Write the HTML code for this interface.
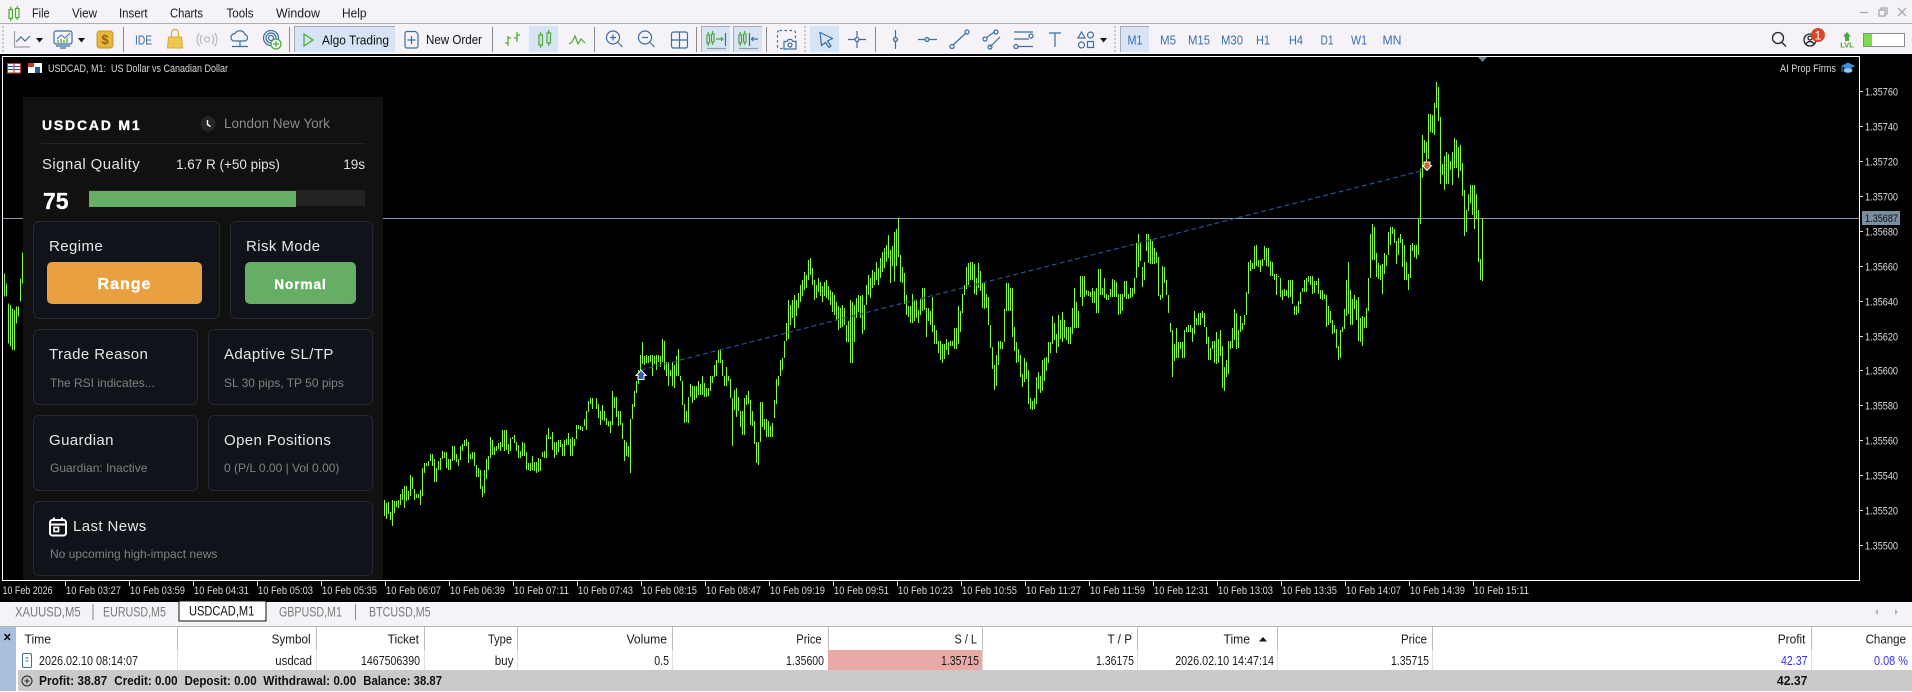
<!DOCTYPE html>
<html><head><meta charset="utf-8"><style>
html,body{margin:0;padding:0;background:#f5f3f7;width:1912px;height:692px;overflow:hidden;font-family:"Liberation Sans",sans-serif}
svg{position:absolute;left:0;top:0}
.p{position:absolute;left:23px;top:97px;width:360px;height:483px;background:#111}
.a{position:absolute;white-space:nowrap}
.c{position:absolute;box-sizing:border-box;background:#10141a;border:1px solid #25292e;border-radius:6px}
.l{font-size:15px;letter-spacing:.4px;color:#e6e6e6;line-height:18px}
.s{font-size:12px;color:#808080;line-height:14px}
.b{position:absolute;border-radius:5px;color:#fff;font-weight:bold;text-align:center;letter-spacing:1px;-webkit-text-stroke:.3px #fff}
</style></head><body>
<svg width="1912" height="692" viewBox="0 0 1912 692" font-family="Liberation Sans, sans-serif">
<!-- bars backgrounds -->
<rect x="0" y="24" width="1912" height="30" fill="#f5f3f7"/>
<rect x="0" y="23" width="1912" height="1" fill="#aeaeae"/>
<rect x="0" y="54" width="1912" height="548" fill="#000"/>
<!-- menu -->
<g fill="none" stroke="#4da832" stroke-width="1.2"><rect x="9" y="9.5" width="3.5" height="9"/><rect x="15.5" y="8.5" width="3.5" height="9"/><path d="M10.7 6.5V9.5M10.7 18.5V21M17.2 6V8.5M17.2 17.5V20"/></g>
<g font-size="12.5" fill="#1a1a1a">
<text x="32" y="17.5" textLength="17.6" lengthAdjust="spacingAndGlyphs">File</text>
<text x="72" y="17.5" textLength="25" lengthAdjust="spacingAndGlyphs">View</text>
<text x="119" y="17.5" textLength="28.6" lengthAdjust="spacingAndGlyphs">Insert</text>
<text x="170" y="17.5" textLength="33" lengthAdjust="spacingAndGlyphs">Charts</text>
<text x="226.5" y="17.5" textLength="27" lengthAdjust="spacingAndGlyphs">Tools</text>
<text x="276" y="17.5" textLength="44" lengthAdjust="spacingAndGlyphs">Window</text>
<text x="342" y="17.5" textLength="24.5" lengthAdjust="spacingAndGlyphs">Help</text>
</g>
<!-- window controls -->
<g stroke="#a8a8a8" fill="none" stroke-width="1.3"><path d="M1860 12.5H1868"/><rect x="1879" y="10" width="6" height="6"/><path d="M1881 10V8H1887V14H1885"/><path d="M1898 8L1906 16M1906 8L1898 16"/></g>
<!-- toolbar pressed -->
<g fill="#d6e4f5"><rect x="294" y="26" width="101" height="26"/><rect x="529" y="26" width="29" height="26"/><rect x="701" y="26" width="29" height="26"/><rect x="733" y="26" width="29" height="26"/><rect x="810" y="26" width="29" height="26"/><rect x="1120" y="26" width="29" height="26"/></g>
<g fill="none" stroke="#a9adb3"><path d="M294.5 52V26.5H395M701.5 52V26.5H730M733.5 52V26.5H762M1120.5 52V26.5H1149"/></g>
<g stroke="#8c8c8c" fill="none"><path d="M123.5 27V52M289.5 27V52M492.5 27V52M594.5 27V52M696.5 27V52M766.5 27V52M875.5 27V52"/></g>
<g stroke="#b5b5b5" stroke-dasharray="2 2" fill="none" stroke-width="1.5"><path d="M3 26V52M805 26V52M1115 26V52"/></g>
<!-- toolbar icons -->
<g fill="none" stroke="#3a6ea5" stroke-width="1.2">
<path d="M14.5 31V47H30" stroke="#a0a0a0"/><path d="M16 42L21 37L25 41L30 36"/>
<rect x="54" y="31" width="18" height="13" rx="2"/><path d="M56 46H70M60 48H66"/><path d="M57 39L61 35L65 38L70 33" stroke-width="1"/>
<path d="M58 43V40M61 43V39M64 43V40M67 43V38" stroke="#4da832"/>
<path d="M231 37a4 4 0 014-3.5a5.5 5.5 0 0110 1a3.3 3.3 0 01-.5 6.5H235a3.5 3.5 0 01-4-4zM240 41.5V46M232 46.5H248"/>
<circle cx="271" cy="38" r="7.5"/><circle cx="271" cy="38" r="5"/><circle cx="271" cy="38" r="2.5"/>
<path d="M408 31.5H415.5L418 34V46a2 2 0 01-2 2H407a2 2 0 01-2-2V33.5a2 2 0 012-2zM411.5 36V44M407.5 40H415.5"/>
<circle cx="613" cy="37.5" r="6.5"/><path d="M618 42.5L622.5 47M610 37.5H616M613 34.5V40.5"/>
<circle cx="645" cy="37.5" r="6.5"/><path d="M650 42.5L654.5 47M642 37.5H648"/>
<rect x="671.5" y="32" width="16" height="16" rx="2"/><path d="M679.5 32V48M671.5 40H687.5"/>
<path d="M725.5 33V46M749.5 33V46M758 39H751.5M753.5 37L751.5 39L753.5 41"/>
<path d="M707 48.5H726M739 48.5H758" stroke="#9a9a9a"/>
<rect x="777.5" y="30.5" width="18" height="18" rx="2" stroke-dasharray="2.5 2.5"/>
<path d="M784 41.5H787L788.5 39.5H791.5L793 41.5H796V49H784Z" fill="#f5f3f7"/><circle cx="790" cy="45" r="2"/>
<path d="M820 32.5L832.5 38.5L827.5 41L831 46L829 47.5L825.5 42.5L821.5 45.5Z"/>
<path d="M848 39.5H866M857 31V48"/><circle cx="857" cy="39.5" r="2" fill="#f5f3f7"/>
<path d="M895.5 30V49"/><circle cx="895.5" cy="39.5" r="2" fill="#cfdcee"/>
<path d="M918 39.5H937"/><circle cx="927" cy="39.5" r="2" fill="#cfdcee"/>
<path d="M953 45L966 33"/><circle cx="952" cy="46.5" r="2"/><circle cx="967" cy="32" r="2"/>
<path d="M986 38L995 31.5M990 47L1000 37"/><circle cx="985" cy="39" r="2"/><circle cx="996" cy="32" r="2"/><circle cx="990" cy="47" r="2"/>
<path d="M1014 32H1033M1014 39H1029M1018 46.5H1033"/><circle cx="1031" cy="36" r="2"/><circle cx="1016" cy="46.5" r="2"/>
<path d="M1049 33H1061M1055 33V47"/>
<path d="M1081.5 32L1085 38H1078Z"/><circle cx="1090.5" cy="35" r="3"/><circle cx="1081.5" cy="45" r="3"/><rect x="1087.5" y="41.5" width="6" height="6"/>
</g>
<g fill="none" stroke="#4da832" stroke-width="1.2">
<path d="M304 34V46L313 40Z"/>
<path d="M508 36V46M505 43H508M508 38H511M517 32V42M514 38H517M517 35H520"/>
<rect x="539" y="35" width="3.5" height="10"/><rect x="547" y="33" width="3.5" height="10"/><path d="M540.7 32V35M540.7 45V48M548.7 30V33M548.7 43V46"/>
<path d="M569 44L572 42L575 36L578 44L581 39L585 43"/>
<rect x="707" y="35" width="2.5" height="8"/><rect x="711.5" y="34" width="2.5" height="8"/><path d="M708.2 32V35M708.2 43V46M712.7 31V34M712.7 42V45M716 39H723M721 37L723 39L721 41"/>
<rect x="739" y="35" width="2.5" height="8"/><rect x="743.5" y="34" width="2.5" height="8"/><path d="M740.2 32V35M740.2 43V46M744.7 31V34M744.7 42V45"/>
</g>
<path d="M36 38H43L39.5 42.5Z M78 38H85L81.5 42.5Z M1100 38H1107L1103.5 42.5Z" fill="#111"/>
<rect x="97" y="31" width="16" height="17" rx="3" fill="#e8b63d" stroke="#c7962a"/>
<text x="105" y="44" font-size="13" font-weight="bold" fill="#8a6414" text-anchor="middle">$</text>
<text x="135" y="44.5" font-size="13" fill="#3a6ea5" textLength="17" lengthAdjust="spacingAndGlyphs">IDE</text>
<path d="M168.5 37H181.5L182.5 48H167.5Z" fill="#f0c84e" stroke="#d7a832"/>
<path d="M171.5 37V33a3.5 3.5 0 017 0V37" fill="none" stroke="#d7a832" stroke-width="1.2"/>
<g fill="none" stroke="#b9b9b9" stroke-width="1.2"><circle cx="207" cy="39.5" r="2.5"/><path d="M202 35a7 7 0 000 9M212 35a7 7 0 010 9M199.5 33a10 10 0 000 13M214.5 33a10 10 0 010 13"/></g>
<circle cx="276" cy="44" r="5" fill="#f5f3f7" stroke="#4da832" stroke-width="1.2"/><path d="M276 41V47M273 44H279" stroke="#4da832" stroke-width="1.2"/>
<text x="322" y="44.5" font-size="13" fill="#111" textLength="67" lengthAdjust="spacingAndGlyphs">Algo Trading</text>
<text x="426" y="44" font-size="13" fill="#111" textLength="56" lengthAdjust="spacingAndGlyphs">New Order</text>
<g font-size="13" fill="#3f6ea8" text-anchor="middle">
<text x="1135" y="44.5" textLength="15" lengthAdjust="spacingAndGlyphs">M1</text>
<text x="1168" y="44.5" textLength="16" lengthAdjust="spacingAndGlyphs">M5</text>
<text x="1199" y="44.5" textLength="22" lengthAdjust="spacingAndGlyphs">M15</text>
<text x="1232" y="44.5" textLength="22" lengthAdjust="spacingAndGlyphs">M30</text>
<text x="1263" y="44.5" textLength="14" lengthAdjust="spacingAndGlyphs">H1</text>
<text x="1296" y="44.5" textLength="14" lengthAdjust="spacingAndGlyphs">H4</text>
<text x="1327" y="44.5" textLength="13" lengthAdjust="spacingAndGlyphs">D1</text>
<text x="1359" y="44.5" textLength="16" lengthAdjust="spacingAndGlyphs">W1</text>
<text x="1392" y="44.5" textLength="19" lengthAdjust="spacingAndGlyphs">MN</text>
</g>
<!-- right side -->
<g fill="none" stroke="#222" stroke-width="1.3"><circle cx="1778" cy="38" r="5.5"/><path d="M1782 42.5L1786 46.5"/><circle cx="1810" cy="40" r="6"/><circle cx="1810" cy="38" r="2"/><path d="M1806 44a4.5 4.5 0 018 0"/></g>
<circle cx="1818" cy="35" r="7" fill="#d9472b"/><text x="1818" y="39.5" font-size="12" fill="#fff" text-anchor="middle">1</text>
<path d="M1847 32L1851 36.5H1849V41H1845V36.5H1843Z" fill="#4da832"/>
<text x="1847" y="47.5" font-size="7.5" font-weight="bold" fill="#4da832" text-anchor="middle">LVL</text>
<rect x="1863.5" y="33.5" width="41" height="13" fill="#fff" stroke="#8c8c8c"/><rect x="1864" y="34" width="8" height="12" fill="#7fdb4f"/>
<!-- chart frame -->
<path d="M2.5 56.5H1859.5V580.5H2.5Z" fill="none" stroke="#fff"/>
<path d="M1478 57H1487L1482.5 62Z" fill="#6f7f91"/>
<!-- price line -->
<rect x="3" y="218" width="1856" height="1" fill="#8a9bb0"/>
<!-- bars -->
<g fill="none" stroke="#88fa2e" shape-rendering="crispEdges">
<g transform="translate(0,90) scale(.33333)" stroke-width="3"><path d="M13 550V620M19 580V620M25 640V760M31 645V770M37 655V780M43 660V782M49 650V700M55 650V680M61 565V635M67 487V580"/></g>
<g transform="translate(384,400) scale(.33333)" stroke-width="3"><path d="M1 300V348M7 309V357M13 306V342M19 336V360M25 300V378M31 303V339M37 303V321M43 300V324M49 282V315M55 267V300M61 258V324M67 258V303M73 273V300M79 225V288M85 231V267M91 267V300M97 282V294M103 282V294M109 270V315M115 204V288M121 189V219M127 189V198M133 183V198M139 162V183M145 162V198M151 177V246M157 204V246M163 183V210M169 174V210M175 153V177M181 156V174M187 156V204M193 177V210M199 177V210M205 138V183M211 138V180M217 162V186M223 177V198M229 138V180M235 132V153M241 120V138M247 117V138M253 126V189M259 162V177M265 156V177M271 156V198M277 195V231M283 204V231M289 210V267M295 258V291M301 210V279M307 177V237M313 168V210M319 111V174M325 120V165M331 141V165M337 138V153M343 129V147M349 126V153M355 90V141M361 90V153M367 90V150M373 132V162M379 114V153M385 111V117M391 105V129M397 126V153M403 135V174M409 153V174M415 126V168M421 129V168M427 156V210M433 189V210M439 189V213M445 168V210M451 186V213M457 186V219M463 174V216M469 177V213M475 156V171M481 153V174M487 105V174M493 84V117M499 111V117M505 96V150M511 126V174M517 126V165M523 120V156M529 120V141M535 132V168M541 120V168M547 117V135M553 99V135M559 117V168M565 111V168M571 117V138M577 75V117M583 75V87M589 78V90M595 81V93M601 57V78M607 33V90M613 3V36M619 -6V12M625 -6V27M637 -6V27M643 12V54"/></g>
<g transform="translate(600,320) scale(.33333)" stroke-width="3"><path d="M1 273V315M7 255V300M13 273V303M19 294V315M25 303V320M31 303V339M37 213V315M43 231V264M49 231V291M55 273V318M61 273V315M67 309V357M73 360V423M79 366V408M85 378V411M91 297V459M97 252V297M103 213V261M109 183V219M115 150V192M121 105V150M127 66V132M133 108V135M139 105V129M145 108V129M151 105V126M157 105V168M163 108V132M169 105V150M175 105V126M181 108V141M187 57V126M193 63V150M199 126V168M205 126V198M211 150V168M217 126V198M223 135V204M229 108V168M235 87V168M241 168V183M247 183V255M253 252V309M259 273V306M265 231V309M271 192V231M277 198V249M283 198V240M289 198V234M295 183V225M301 192V225M307 168V225M313 189V231M319 204V231M325 204V228M331 168V213M337 168V189M343 135V171M349 120V168M355 90V129M361 87V129M367 120V168M373 168V198M379 141V198M385 168V183M391 177V234M397 234V378M403 210V270M409 204V291M415 231V273M421 273V321M427 273V345M433 234V345M439 225V255M445 213V252M451 240V315M457 273V318M463 303V372M469 366V429M475 366V435M481 246V366M487 246V321M493 297V330M499 297V351M505 303V351M511 318V351M517 309V351M523 240V294M529 177V252M535 168V198M541 120V168M547 114V150M553 63V114"/></g>
<g stroke-width="1"><path d="M786.5 323V341M788.5 300V339M790.5 305V325M792.5 300V318M794.5 295V328M796.5 300V316M798.5 293V308M800.5 285V302M802.5 280V296M804.5 272V290M806.5 275V288M808.5 260V280M810.5 258V275M812.5 268V285M814.5 280V300M816.5 285V298M818.5 278V292M820.5 282V296M822.5 286V302M824.5 282V296M826.5 280V298M828.5 286V300M830.5 290V305M832.5 292V312M834.5 295V315M836.5 302V320M838.5 306V330M840.5 308V328M842.5 305V327M844.5 308V325M846.5 325V342M848.5 321V342M850.5 300V363M852.5 302V363M854.5 305V342M856.5 298V318M858.5 295V312M860.5 296V318M862.5 295V334M864.5 305V330M866.5 285V305M868.5 275V295M870.5 278V298M872.5 270V288M874.5 272V285M876.5 262V280M878.5 268V285M880.5 258V278M882.5 252V272M884.5 248V268M886.5 245V262M888.5 235V258"/></g>
<g transform="translate(890,210) scale(.33333)" stroke-width="3"><path d="M1 120V219M7 108V168M13 66V215M19 57V168M25 24V141M31 135V216M37 171V219M43 189V282M49 255V315M55 288V321M61 288V339M67 252V339M73 273V333M79 270V324M85 300V339M91 267V315M97 234V303M103 234V300M109 294V381M115 294V333M121 303V345M127 261V366M133 345V402M139 360V402M145 393V429M151 393V450M157 402V459M163 402V447M169 387V420M175 396V435M181 393V408M187 393V408M193 354V417M199 354V417M205 288V402M211 303V366M217 252V309M223 225V255M229 171V237M235 159V225M241 156V210M247 156V210M253 162V252M259 204V255M265 159V234M271 183V243M277 219V294M283 216V297M289 252V294M295 261V345M301 345V414M307 411V477M313 465V540M319 435V528M325 393V465M331 393V417M337 396V417M343 297V396M349 219V303M355 219V303M361 234V303M367 234V381M373 351V423M379 396V459M385 417V456M391 435V501M397 492V531M403 444V516M409 456V507M415 480V582M421 564V597M427 573V600M433 564V597M439 501V582M445 486V537M451 498V549M457 450V543M463 444V513M469 441V483M475 396V459M481 396V429M487 318V402M493 339V390M499 372V429M505 315V411M511 330V387M517 306V396M523 330V384M529 351V390M535 351V402M541 351V402M547 294V372M553 234V354M559 276V354M565 303V354M571 198V261M577 198V288M583 198V261M589 240V255M595 243V258M601 246V261M607 234V279M613 243V279M619 234V309M625 177V309M631 177V255M637 234V255M643 204V264M649 252V270M655 255V270M661 237V261M667 207V261M673 210V261M679 216V261M685 252V315M691 252V312M697 252V303M703 213V261M709 213V267M715 252V267M721 234V264M727 234V261M733 204V252M739 99V204M745 72V171M751 96V153M757 171V231M763 156V210M769 72V123M775 72V159M781 87V162M787 93V162M793 114V162M799 126V159M805 141V258M811 255V270M817 168V264M823 171V219M829 210V255M835 255V309M841 339V366M847 360V501M853 402V453M859 354V444M865 396V444M871 396V417M877 396V444M883 360V444M889 351V366M895 345V366M901 345V366M907 354V396M913 303V372M919 324V345M925 309V345M931 309V345M937 303V324M943 309V351M949 351V402M955 381V450M961 414V450M967 393V417M973 393V459M979 366V462M985 387V459M991 360V438M997 408V534M1003 471V543M1009 450V501M1015 393V492M1021 393V417M1027 354V414M1033 297V390M1039 309V417M1045 360V414M1051 318V366M1057 339V360M1063 315V345M1069 246V315M1075 156V252M1081 150V183M1087 159V177M1093 108V177M1099 105V168M1105 150V171M1111 150V186M1117 147V168M1123 108V150M1129 114V168M1135 114V171M1141 153V198M1147 156V198M1153 192V210M1159 192V255M1165 198V201M1171 204V261M1177 240V270M1183 237V258M1189 240V258M1195 210V264M1201 210V261M1207 210V282M1213 288V315M1219 288V315M1225 273V309M1231 246V282M1237 234V246M1243 210V246M1249 204V246M1255 198V216M1261 198V225M1267 198V252M1273 213V249M1279 213V225M1285 204V252M1291 240V267M1297 240V270M1303 252V267M1309 255V351M1315 288V345M1321 303V339M1327 330V372M1333 345V369M1339 357V414M1345 408V450M1351 360V444M1357 351V366M1363 297V357M1369 210V318M1375 156V312M1381 240V345M1387 267V345M1393 255V297M1399 270V330M1405 261V393M1411 324V396M1417 318V408M1423 321V354M1429 294V354M1435 204V303M1441 72V204M1447 42V150M1453 51V150M1459 129V201M1465 159V207M1471 165V210M1477 162V252M1483 129V192M1489 135V168M1495 66V135"/></g>
<g transform="translate(1320,70) scale(.33333)" stroke-width="3"><path d="M211 471V525M217 471V492M223 477V519M229 513V582M235 504V555M241 492V519M247 507V591M253 525V630M259 576V630M265 612V660M271 525V624M277 519V543M283 525V561M289 525V567M295 445V555M301 295V462M307 195V323M313 210V249M319 216V279M325 132V267M331 132V186M337 135V189M343 99V195M349 36V114M355 51V153M361 141V342M367 282V315M373 258V360M379 246V342M385 252V342M391 273V300M397 246V345M403 204V294M409 210V294M415 231V324M421 225V303M427 279V378M433 360V498M439 420V486M445 372V423M451 345V400M457 345V435M463 345V477M469 372V445M475 420V576M481 567V630M487 445V633"/></g>
</g>
<!-- trade line + arrows -->
<path d="M641 370L1425 170" stroke="#2a4f8f" stroke-width="1.2" stroke-dasharray="5 3" fill="none"/>
<path d="M641 370L646 375.5H644V379.5H638V375.5H636Z" fill="#2f5fa8" stroke="#fff"/>
<path d="M1427 170.5L1431.5 165.5H1430V162H1424V165.5H1422.5Z" fill="#d2622a" stroke="#fff"/>
<!-- price scale -->
<g font-size="11" fill="#dcdcdc" stroke="none">
<text x="1865" y="95.5" textLength="33" lengthAdjust="spacingAndGlyphs">1.35760</text>
<text x="1865" y="130.5" textLength="33" lengthAdjust="spacingAndGlyphs">1.35740</text>
<text x="1865" y="165.5" textLength="33" lengthAdjust="spacingAndGlyphs">1.35720</text>
<text x="1865" y="200.5" textLength="33" lengthAdjust="spacingAndGlyphs">1.35700</text>
<text x="1865" y="235.5" textLength="33" lengthAdjust="spacingAndGlyphs">1.35680</text>
<text x="1865" y="270.5" textLength="33" lengthAdjust="spacingAndGlyphs">1.35660</text>
<text x="1865" y="305.5" textLength="33" lengthAdjust="spacingAndGlyphs">1.35640</text>
<text x="1865" y="340.5" textLength="33" lengthAdjust="spacingAndGlyphs">1.35620</text>
<text x="1865" y="374.5" textLength="33" lengthAdjust="spacingAndGlyphs">1.35600</text>
<text x="1865" y="409.5" textLength="33" lengthAdjust="spacingAndGlyphs">1.35580</text>
<text x="1865" y="444.5" textLength="33" lengthAdjust="spacingAndGlyphs">1.35560</text>
<text x="1865" y="479.5" textLength="33" lengthAdjust="spacingAndGlyphs">1.35540</text>
<text x="1865" y="514.5" textLength="33" lengthAdjust="spacingAndGlyphs">1.35520</text>
<text x="1865" y="549.5" textLength="33" lengthAdjust="spacingAndGlyphs">1.35500</text>
</g>
<path d="M1860 91.5H1863M1860 126.5H1863M1860 161.5H1863M1860 196.5H1863M1860 231.5H1863M1860 266.5H1863M1860 301.5H1863M1860 336.5H1863M1860 370.5H1863M1860 405.5H1863M1860 440.5H1863M1860 475.5H1863M1860 510.5H1863M1860 545.5H1863" stroke="#ddd"/>
<rect x="1862" y="211" width="38" height="14" fill="#7b8ea1"/>
<text x="1865" y="222" font-size="11" fill="#111" textLength="33" lengthAdjust="spacingAndGlyphs">1.35687</text>
<!-- time scale -->
<path d="M65.5 581V586M129.5 581V586M193.5 581V586M257.5 581V586M321.5 581V586M385.5 581V586M449.5 581V586M513.5 581V586M577.5 581V586M641.5 581V586M705.5 581V586M769.5 581V586M833.5 581V586M897.5 581V586M961.5 581V586M1025.5 581V586M1089.5 581V586M1153.5 581V586M1217.5 581V586M1281.5 581V586M1345.5 581V586M1409.5 581V586M1473.5 581V586" stroke="#ddd"/>
<g font-size="11" fill="#dcdcdc">
<text x="2.5" y="594" textLength="50" lengthAdjust="spacingAndGlyphs">10 Feb 2026</text>
<text x="66" y="594" textLength="55" lengthAdjust="spacingAndGlyphs">10 Feb 03:27</text>
<text x="130" y="594" textLength="55" lengthAdjust="spacingAndGlyphs">10 Feb 03:59</text>
<text x="194" y="594" textLength="55" lengthAdjust="spacingAndGlyphs">10 Feb 04:31</text>
<text x="258" y="594" textLength="55" lengthAdjust="spacingAndGlyphs">10 Feb 05:03</text>
<text x="322" y="594" textLength="55" lengthAdjust="spacingAndGlyphs">10 Feb 05:35</text>
<text x="386" y="594" textLength="55" lengthAdjust="spacingAndGlyphs">10 Feb 06:07</text>
<text x="450" y="594" textLength="55" lengthAdjust="spacingAndGlyphs">10 Feb 06:39</text>
<text x="514" y="594" textLength="55" lengthAdjust="spacingAndGlyphs">10 Feb 07:11</text>
<text x="578" y="594" textLength="55" lengthAdjust="spacingAndGlyphs">10 Feb 07:43</text>
<text x="642" y="594" textLength="55" lengthAdjust="spacingAndGlyphs">10 Feb 08:15</text>
<text x="706" y="594" textLength="55" lengthAdjust="spacingAndGlyphs">10 Feb 08:47</text>
<text x="770" y="594" textLength="55" lengthAdjust="spacingAndGlyphs">10 Feb 09:19</text>
<text x="834" y="594" textLength="55" lengthAdjust="spacingAndGlyphs">10 Feb 09:51</text>
<text x="898" y="594" textLength="55" lengthAdjust="spacingAndGlyphs">10 Feb 10:23</text>
<text x="962" y="594" textLength="55" lengthAdjust="spacingAndGlyphs">10 Feb 10:55</text>
<text x="1026" y="594" textLength="55" lengthAdjust="spacingAndGlyphs">10 Feb 11:27</text>
<text x="1090" y="594" textLength="55" lengthAdjust="spacingAndGlyphs">10 Feb 11:59</text>
<text x="1154" y="594" textLength="55" lengthAdjust="spacingAndGlyphs">10 Feb 12:31</text>
<text x="1218" y="594" textLength="55" lengthAdjust="spacingAndGlyphs">10 Feb 13:03</text>
<text x="1282" y="594" textLength="55" lengthAdjust="spacingAndGlyphs">10 Feb 13:35</text>
<text x="1346" y="594" textLength="55" lengthAdjust="spacingAndGlyphs">10 Feb 14:07</text>
<text x="1410" y="594" textLength="55" lengthAdjust="spacingAndGlyphs">10 Feb 14:39</text>
<text x="1474" y="594" textLength="55" lengthAdjust="spacingAndGlyphs">10 Feb 15:11</text>
</g>
<!-- chart title -->
<g><rect x="7.5" y="63.5" width="13" height="9.5" fill="#f4f4f4" stroke="#c23a2e"/><path d="M8 66.5H20M8 69.5H20" stroke="#2a55a5"/><path d="M14 64V73" stroke="#c23a2e"/></g>
<g><rect x="28" y="63" width="14" height="10" fill="#fff"/><rect x="28" y="63" width="6" height="4" fill="#c23a2e"/><rect x="35" y="67" width="5" height="6" fill="#2a55a5"/></g>
<text x="48" y="72" font-size="11" fill="#d8d8d8" textLength="180" lengthAdjust="spacingAndGlyphs">USDCAD, M1:&#160;&#160;US Dollar vs Canadian Dollar</text>
<text x="1780" y="72" font-size="11" fill="#d8d8d8" textLength="56" lengthAdjust="spacingAndGlyphs">AI Prop Firms</text>
<path d="M1841 66L1848 62.5L1855 66L1848 69.5Z" fill="#3f8fd8"/><path d="M1844 68.5V71.5Q1848 74 1852 71.5V68.5" fill="#9fc8ee" stroke="#3f8fd8" stroke-width=".7"/><path d="M1842 67V72" stroke="#3f8fd8"/>
<!-- tabs -->
<rect x="0" y="602" width="1912" height="24" fill="#f5f3f7"/>
<rect x="179" y="601" width="87" height="20" fill="#fff" stroke="#111"/>
<g font-size="13.5" fill="#7a7a7a">
<text x="15" y="616.5" textLength="65.7" lengthAdjust="spacingAndGlyphs">XAUUSD,M5</text>
<text x="103" y="616.5" textLength="62.9" lengthAdjust="spacingAndGlyphs">EURUSD,M5</text>
<text x="189" y="615.5" textLength="65.3" lengthAdjust="spacingAndGlyphs" fill="#111">USDCAD,M1</text>
<text x="279" y="616.5" textLength="62.9" lengthAdjust="spacingAndGlyphs">GBPUSD,M1</text>
<text x="369" y="616.5" textLength="61.6" lengthAdjust="spacingAndGlyphs">BTCUSD,M5</text>
</g>
<path d="M93 604V620M355.5 604V620" stroke="#8a8a8a"/>
<path d="M1895 609L1898 612 1895 615Z M1878 609L1875 612L1878 615Z" fill="#b5b5b5"/>
<!-- table -->
<rect x="0" y="626" width="1912" height="1" fill="#b4b4b4"/>
<rect x="0" y="627" width="1912" height="65" fill="#fff"/>
<rect x="0" y="627" width="16" height="64" fill="#a9bfdc"/>
<path d="M4.5 634L10 640M10 634L4.5 640" stroke="#111" stroke-width="1.6"/>
<rect x="828" y="650" width="154" height="20" fill="#e8a9a7"/>
<rect x="18" y="670" width="1894" height="21" fill="#cbc9cc"/>
<g stroke="#bdbdbd"><path d="M177.5 627V650M316.5 627V650M424.5 627V650M517.5 627V650M672.5 627V650M828.5 627V650M982.5 627V650M1137.5 627V650M1277.5 627V650M1432.5 627V650M1811.5 627V650"/></g>
<g stroke="#e0e0e0"><path d="M177.5 650V670M316.5 650V670M424.5 650V670M517.5 650V670M672.5 650V670M982.5 650V670M1137.5 650V670M1277.5 650V670M1432.5 650V670M1811.5 650V670"/></g>
<g font-size="13" fill="#1a1a1a">
<text x="24.5" y="643.5" textLength="26.5" lengthAdjust="spacingAndGlyphs">Time</text>
<g text-anchor="end">
<text x="310.6" y="643.5" textLength="39" lengthAdjust="spacingAndGlyphs">Symbol</text>
<text x="419" y="643.5" textLength="31.4" lengthAdjust="spacingAndGlyphs">Ticket</text>
<text x="512" y="643.5" textLength="24" lengthAdjust="spacingAndGlyphs">Type</text>
<text x="667" y="643.5" textLength="40.5" lengthAdjust="spacingAndGlyphs">Volume</text>
<text x="821.6" y="643.5" textLength="25.3" lengthAdjust="spacingAndGlyphs">Price</text>
<text x="977" y="643.5" textLength="22.5" lengthAdjust="spacingAndGlyphs">S / L</text>
<text x="1132" y="643.5" textLength="24.5" lengthAdjust="spacingAndGlyphs">T / P</text>
<text x="1250" y="643.5" textLength="26.5" lengthAdjust="spacingAndGlyphs">Time</text>
<text x="1427" y="643.5" textLength="26" lengthAdjust="spacingAndGlyphs">Price</text>
<text x="1805.5" y="643.5" textLength="27.8" lengthAdjust="spacingAndGlyphs">Profit</text>
<text x="1906" y="643.5" textLength="40.4" lengthAdjust="spacingAndGlyphs">Change</text>
<text x="312" y="665" textLength="36.7" lengthAdjust="spacingAndGlyphs">usdcad</text>
<text x="420" y="665" textLength="59" lengthAdjust="spacingAndGlyphs">1467506390</text>
<text x="513.5" y="665" textLength="18.8" lengthAdjust="spacingAndGlyphs">buy</text>
<text x="669" y="665" textLength="14.7" lengthAdjust="spacingAndGlyphs">0.5</text>
<text x="824" y="665" textLength="38" lengthAdjust="spacingAndGlyphs">1.35600</text>
<text x="979" y="665" textLength="38" lengthAdjust="spacingAndGlyphs">1.35715</text>
<text x="1134" y="665" textLength="38" lengthAdjust="spacingAndGlyphs">1.36175</text>
<text x="1274" y="665" textLength="98.8" lengthAdjust="spacingAndGlyphs">2026.02.10 14:47:14</text>
<text x="1429" y="665" textLength="38" lengthAdjust="spacingAndGlyphs">1.35715</text>
<text x="1807.5" y="665" textLength="26.5" lengthAdjust="spacingAndGlyphs" fill="#3333ee">42.37</text>
<text x="1908" y="665" textLength="34" lengthAdjust="spacingAndGlyphs" fill="#3333ee">0.08 %</text>
</g>
<text x="39" y="665" textLength="99" lengthAdjust="spacingAndGlyphs">2026.02.10 08:14:07</text>
</g>
<path d="M1259 641.5L1263 637L1267 641.5Z" fill="#111"/>
<rect x="22.5" y="653.5" width="9" height="14" rx="1.5" fill="#fff" stroke="#3a6ea5"/><path d="M25.5 658H28.5M25.5 661H28.5" stroke="#3a6ea5"/>
<g font-size="13" font-weight="bold" fill="#111">
<text x="39" y="685" textLength="68.3" lengthAdjust="spacingAndGlyphs">Profit: 38.87</text>
<text x="114.3" y="685" textLength="63.3" lengthAdjust="spacingAndGlyphs">Credit: 0.00</text>
<text x="184.5" y="685" textLength="72.2" lengthAdjust="spacingAndGlyphs">Deposit: 0.00</text>
<text x="263.3" y="685" textLength="93" lengthAdjust="spacingAndGlyphs">Withdrawal: 0.00</text>
<text x="363.3" y="685" textLength="78.7" lengthAdjust="spacingAndGlyphs">Balance: 38.87</text>
<text x="1807.5" y="685" textLength="30.6" lengthAdjust="spacingAndGlyphs" text-anchor="end">42.37</text>
</g>
<circle cx="27" cy="681" r="5" fill="none" stroke="#222"/><path d="M24.5 681H29.5M27 678.5V683.5" stroke="#222"/>
</svg>

<div class="p">
  <div class="a" style="left:19px;top:20px;font-size:14px;font-weight:bold;letter-spacing:1.8px;color:#fff;line-height:16px;-webkit-text-stroke:.3px #fff">USDCAD M1</div>
  <svg style="left:177px;top:19px" width="16" height="16"><circle cx="8" cy="8" r="7.5" fill="#26262a"/><path d="M7.5 4V8.5L10.5 10.5" stroke="#fff" stroke-width="1.4" fill="none"/></svg>
  <div class="a" style="left:201px;top:18px;font-size:13.5px;color:#8a8a8a;line-height:17px">London New York</div>
  <div class="a" style="left:18px;top:46px;width:324px;height:1px;background:#232323"></div>
  <div class="a" style="left:19px;top:59px;font-size:15px;letter-spacing:.4px;color:#e2e2e2;line-height:18px">Signal Quality</div>
  <div class="a" style="left:153px;top:60px;font-size:13.5px;color:#e2e2e2;line-height:16px">1.67 R (+50 pips)</div>
  <div class="a" style="right:18px;top:60px;font-size:13.5px;color:#e2e2e2;line-height:16px">19s</div>
  <div class="a" style="left:20px;top:91px;font-size:23px;font-weight:bold;color:#fff;line-height:26px;-webkit-text-stroke:.3px #fff">75</div>
  <div class="a" style="left:66px;top:93px;width:276px;height:16px;background:#20231f"></div>
  <div class="a" style="left:66px;top:94px;width:207px;height:16px;background:#66ad66"></div>

  <div class="c" style="left:10px;top:124px;width:187px;height:98px">
    <div class="a l" style="left:15px;top:16px">Regime</div>
    <div class="b" style="left:13px;top:40px;width:155px;height:42px;line-height:45px;background:#e9a040;font-size:16px">Range</div>
  </div>
  <div class="c" style="left:207px;top:124px;width:143px;height:98px">
    <div class="a l" style="left:15px;top:16px">Risk Mode</div>
    <div class="b" style="left:14px;top:40px;width:111px;height:42px;line-height:45px;background:#66ad66;font-size:13.5px">Normal</div>
  </div>
  <div class="c" style="left:10px;top:232px;width:165px;height:76px">
    <div class="a l" style="left:15px;top:16px">Trade Reason</div>
    <div class="a s" style="left:16px;top:46px">The RSI indicates...</div>
  </div>
  <div class="c" style="left:185px;top:232px;width:165px;height:76px">
    <div class="a l" style="left:15px;top:16px">Adaptive SL/TP</div>
    <div class="a s" style="left:15px;top:46px">SL 30 pips, TP 50 pips</div>
  </div>
  <div class="c" style="left:10px;top:318px;width:165px;height:76px">
    <div class="a l" style="left:15px;top:16px">Guardian</div>
    <div class="a s" style="left:16px;top:45px">Guardian: Inactive</div>
  </div>
  <div class="c" style="left:185px;top:318px;width:165px;height:76px">
    <div class="a l" style="left:15px;top:16px">Open Positions</div>
    <div class="a s" style="left:15px;top:45px">0 (P/L 0.00 | Vol 0.00)</div>
  </div>
  <div class="c" style="left:10px;top:404px;width:340px;height:75px">
    <svg style="left:14px;top:14px" width="20" height="21"><rect x="2" y="4" width="16" height="15.5" rx="2.5" fill="none" stroke="#fff" stroke-width="2"/><path d="M2 8.5H18M6 1.5V5M14 1.5V5" stroke="#fff" stroke-width="2"/><rect x="6" y="11.5" width="4.5" height="4" fill="none" stroke="#fff" stroke-width="1.6"/></svg>
    <div class="a l" style="left:39px;top:16px">Last News</div>
    <div class="a s" style="left:16px;top:45px">No upcoming high-impact news</div>
  </div>
</div>
</body></html>
